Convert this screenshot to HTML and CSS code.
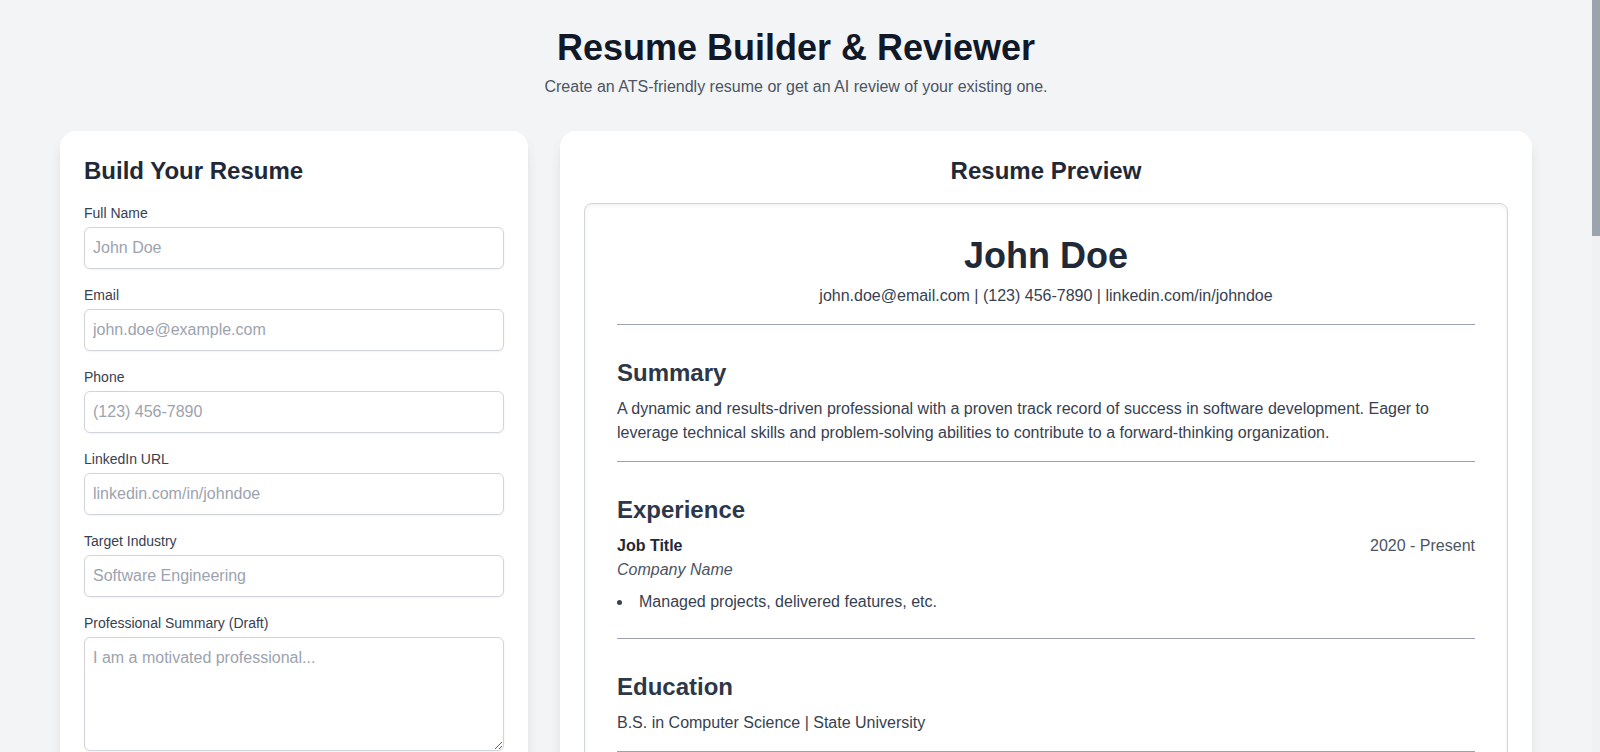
FILE: index.html
```html
<!DOCTYPE html>
<html lang="en">
<head>
<meta charset="utf-8">
<title>Resume Builder &amp; Reviewer</title>
<link rel="stylesheet" href="styles.css">
</head>
<body>
<div class="page">
  <header class="page-header">
    <h1 class="page-title">Resume Builder &amp; Reviewer</h1>
    <p class="page-subtitle">Create an ATS-friendly resume or get an AI review of your existing one.</p>
  </header>

  <main class="layout">
    <section class="card form-card">
      <h2 class="card-title">Build Your Resume</h2>
      <div class="field">
        <label class="field-label" for="name">Full Name</label>
        <input class="field-input" id="name" type="text" placeholder="John Doe">
      </div>
      <div class="field">
        <label class="field-label" for="email">Email</label>
        <input class="field-input" id="email" type="email" placeholder="john.doe@example.com">
      </div>
      <div class="field">
        <label class="field-label" for="phone">Phone</label>
        <input class="field-input" id="phone" type="text" placeholder="(123) 456-7890">
      </div>
      <div class="field">
        <label class="field-label" for="linkedin">LinkedIn URL</label>
        <input class="field-input" id="linkedin" type="text" placeholder="linkedin.com/in/johndoe">
      </div>
      <div class="field">
        <label class="field-label" for="industry">Target Industry</label>
        <input class="field-input" id="industry" type="text" placeholder="Software Engineering">
      </div>
      <div class="field">
        <label class="field-label" for="summary">Professional Summary (Draft)</label>
        <textarea class="field-input field-textarea" id="summary" rows="4" placeholder="I am a motivated professional..."></textarea>
      </div>

      <h3 class="sub-title">Work Experience</h3>
      <div class="field">
        <label class="field-label" for="job">Job Title</label>
        <input class="field-input" id="job" type="text" placeholder="Software Engineer">
      </div>
      <div class="field">
        <label class="field-label" for="company">Company</label>
        <input class="field-input" id="company" type="text" placeholder="Tech Corp">
      </div>
      <div class="field">
        <label class="field-label" for="dates">Dates</label>
        <input class="field-input" id="dates" type="text" placeholder="2020 - Present">
      </div>
      <div class="field">
        <label class="field-label" for="duties">Responsibilities (Draft)</label>
        <textarea class="field-input field-textarea" id="duties" rows="4" placeholder="Managed projects, delivered features, etc."></textarea>
      </div>

      <h3 class="sub-title">Education</h3>
      <div class="field">
        <label class="field-label" for="degree">Degree</label>
        <input class="field-input" id="degree" type="text" placeholder="B.S. in Computer Science">
      </div>
      <div class="field">
        <label class="field-label" for="school">School</label>
        <input class="field-input" id="school" type="text" placeholder="State University">
      </div>
      <div class="field">
        <label class="field-label" for="skills">Skills (comma separated)</label>
        <textarea class="field-input field-textarea" id="skills" rows="3" placeholder="JavaScript, React, Node.js"></textarea>
      </div>
      <button class="btn btn-primary" type="button">Enhance with AI</button>
    </section>

    <section class="card preview-card">
      <h2 class="card-title centered">Resume Preview</h2>
      <div class="resume">
        <div class="resume-header">
          <h2 class="resume-name">John Doe</h2>
          <p class="resume-contact">john.doe@email.com | (123) 456-7890 | linkedin.com/in/johndoe</p>
        </div>
        <div class="resume-section">
          <h3 class="resume-heading">Summary</h3>
          <p class="resume-text">A dynamic and results-driven professional with a proven track record of success in software development. Eager to leverage technical skills and problem-solving abilities to contribute to a forward-thinking organization.</p>
        </div>
        <div class="resume-section">
          <h3 class="resume-heading">Experience</h3>
          <div class="job">
            <div class="job-row">
              <span class="job-title">Job Title</span>
              <span class="job-dates">2020 - Present</span>
            </div>
            <p class="job-company">Company Name</p>
            <ul class="job-list">
              <li>Managed projects, delivered features, etc.</li>
            </ul>
          </div>
        </div>
        <div class="resume-section">
          <h3 class="resume-heading">Education</h3>
          <p class="resume-text">B.S. in Computer Science | State University</p>
        </div>
        <div class="resume-section last">
          <h3 class="resume-heading">Skills</h3>
          <p class="resume-text">JavaScript, React, Node.js, SQL, Git</p>
        </div>
      </div>
      <div class="actions">
        <button class="btn btn-secondary" type="button">Download as PDF</button>
      </div>
    </section>
  </main>

  <section class="card review-card">
    <h2 class="card-title">AI Resume Review</h2>
    <p class="review-note">Paste your existing resume below to get instant, actionable feedback.</p>
    <textarea class="field-input field-textarea" rows="12" placeholder="Paste your resume text here..."></textarea>
    <button class="btn btn-primary review-btn" type="button">Get AI Review</button>
    <div class="review-result">Your review will appear here.</div>
  </section>
</div>

<div class="scrollbar" aria-hidden="true"><div class="scrollbar-thumb"></div></div>
</body>
</html>
```

FILE: styles.css
```css
* { box-sizing: border-box; }

html { background: #f3f4f6; }

body {
  margin: 0;
  padding-right: 8px;
  background: #f3f4f6;
  font-family: "Liberation Sans", Arial, sans-serif;
  color: #1f2937;
}

/* drawn page scrollbar (overlay) */
.scrollbar {
  position: fixed;
  top: 0;
  right: 0;
  width: 8px;
  height: 100vh;
  background: #f1f1f1;
}

.scrollbar-thumb {
  height: 236px;
  background: #9ca3af;
}

.page {
  max-width: 1472px;
  margin: 0 auto;
  padding: 30px 0 64px;
}

.page-header {
  text-align: center;
  margin-bottom: 32px;
}

.page-title {
  margin: 0;
  font-size: 36px;
  line-height: 36px;
  font-weight: 700;
  color: #111827;
}

.page-subtitle {
  margin: 9px 0 0;
  font-size: 16px;
  line-height: 24px;
  color: #4b5563;
}

.layout {
  display: grid;
  grid-template-columns: 468px 1fr;
  gap: 32px;
  align-items: start;
}

.card {
  background: #ffffff;
  border-radius: 16px;
  padding: 24px;
  box-shadow: 0 10px 15px -3px rgba(0, 0, 0, 0.1), 0 4px 6px -4px rgba(0, 0, 0, 0.1);
}

.card-title {
  margin: 0 0 16px;
  font-size: 24px;
  line-height: 32px;
  font-weight: 700;
  color: #1f2937;
}

.card-title.centered { text-align: center; }

.field { margin-bottom: 16px; }

.field-label {
  display: block;
  margin-bottom: 4px;
  font-size: 14px;
  line-height: 20px;
  color: #374151;
}

.field-input {
  display: block;
  width: 100%;
  padding: 8px;
  border: 1px solid #d1d5db;
  border-radius: 6px;
  font-family: "Liberation Sans", Arial, sans-serif;
  font-size: 16px;
  line-height: 24px;
  color: #1f2937;
  background: #ffffff;
  box-shadow: 0 1px 2px rgba(0, 0, 0, 0.05);
}

.field-input::placeholder { color: #9ca3af; }

.field-textarea { resize: vertical; }

.sub-title {
  margin: 24px 0 16px;
  font-size: 18px;
  line-height: 28px;
  font-weight: 600;
  color: #1f2937;
}

.btn {
  display: block;
  width: 100%;
  padding: 12px 16px;
  border: none;
  border-radius: 8px;
  font-family: "Liberation Sans", Arial, sans-serif;
  font-size: 16px;
  line-height: 24px;
  font-weight: 700;
  color: #ffffff;
  cursor: pointer;
}

.btn-primary { background: #2563eb; }
.btn-secondary { background: #16a34a; }

.resume {
  border: 1px solid #d1d5db;
  border-radius: 8px;
  padding: 32px;
  box-shadow: inset 0 2px 4px rgba(0, 0, 0, 0.05);
  color: #374151;
}

.resume-header {
  text-align: center;
  padding-bottom: 16px;
  border-bottom: 1px solid #9ca3af;
}

.resume-name {
  margin: 0;
  font-size: 36px;
  line-height: 40px;
  font-weight: 700;
  color: #1f2937;
}

.resume-contact {
  margin: 8px 0 0;
  font-size: 16px;
  line-height: 24px;
  color: #374151;
}

.resume-section {
  margin-top: 32px;
  padding-bottom: 16px;
  border-bottom: 1px solid #9ca3af;
}

.resume-section.last { border-bottom: none; padding-bottom: 0; }

.resume-heading {
  margin: 0 0 8px;
  font-size: 24px;
  line-height: 32px;
  font-weight: 700;
  color: #2d3748;
}

.resume-text {
  margin: 0;
  font-size: 16px;
  line-height: 24px;
  color: #374151;
}

.job-row {
  display: flex;
  justify-content: space-between;
  font-size: 16px;
  line-height: 24px;
}

.job-title { font-weight: 700; color: #1f2937; }
.job-dates { color: #4b5563; }

.job-company {
  margin: 0;
  font-size: 16px;
  line-height: 24px;
  font-style: italic;
  color: #4b5563;
}

.job-list {
  margin: 8px 0 8px;
  padding-left: 0;
  list-style: disc inside;
  font-size: 16px;
  line-height: 24px;
  color: #374151;
}

.actions { margin-top: 24px; }

.review-card { margin-top: 32px; }

.review-note {
  margin: 0 0 16px;
  font-size: 16px;
  line-height: 24px;
  color: #4b5563;
}

.review-btn { margin-top: 16px; }

.review-result {
  margin-top: 24px;
  padding: 24px;
  border: 1px dashed #d1d5db;
  border-radius: 8px;
  min-height: 120px;
  color: #6b7280;
  font-size: 16px;
  line-height: 24px;
}
```
